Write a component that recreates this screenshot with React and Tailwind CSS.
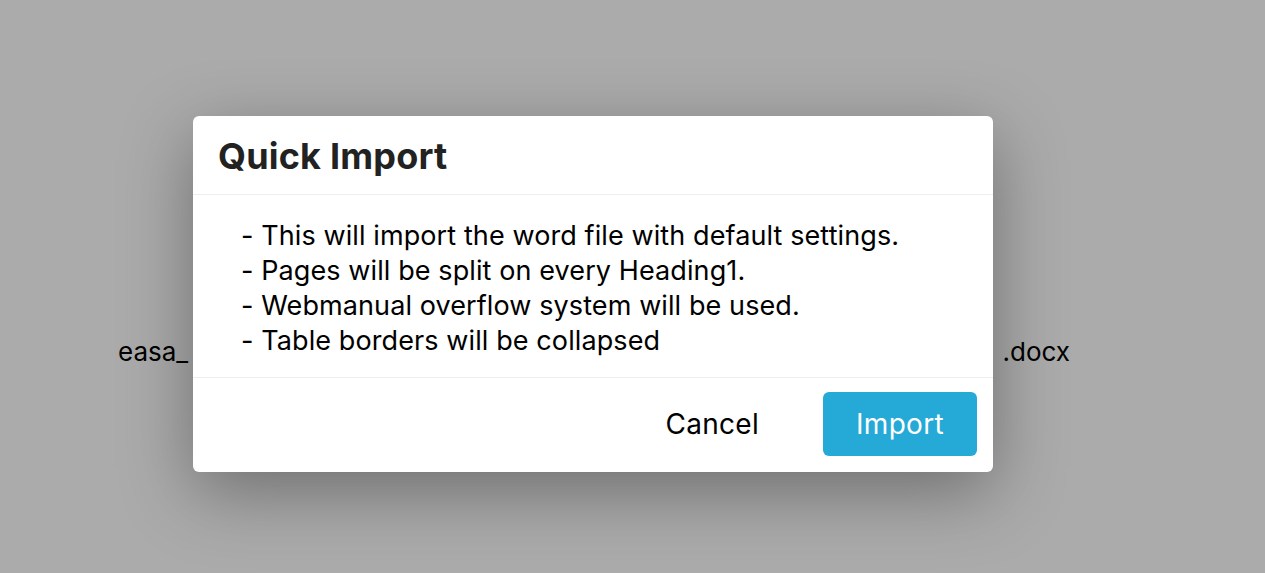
import React from "react";

const notes = [
  "- This will import the word file with default settings.",
  "- Pages will be split on every Heading1.",
  "- Webmanual overflow system will be used.",
  "- Table borders will be collapsed",
];

const QuickImportDialog = () => {
  return (
    <div className="absolute left-[193px] top-[116px] w-[800px] rounded-md bg-white shadow-[0_20px_70px_rgba(0,0,0,0.35)]">
      <div className="border-b border-[#eeeeee] px-[25px] pt-[20px] pb-[18px]">
        <h1 className="text-[36px] font-bold leading-[40px] tracking-[0.2px] text-[#222222]">
          Quick Import
        </h1>
      </div>
      <div className="border-b border-[#eeeeee] pl-[48px] pt-[23px] pb-[19px]">
        {notes.map((note, index) => (
          <p key={index} className="text-[27px] leading-[35px] tracking-[0.1px] text-black">
            {note}
          </p>
        ))}
      </div>
      <div className="flex items-center justify-end gap-[64px] px-[16px] pt-[14px] pb-[16px]">
        <button className="text-[28px] tracking-[0.3px] text-black">Cancel</button>
        <button className="h-[64px] w-[154px] rounded-md bg-[#25a9d7] text-[28px] tracking-[0.3px] text-white">
          Import
        </button>
      </div>
    </div>
  );
};

export default function App() {
  return (
    <div
      className="relative h-[573px] w-full overflow-hidden bg-[#ababab]"
      style={{ fontFamily: "Inter, 'Noto Sans', sans-serif" }}
    >
      <div className="ml-[118px] flex w-[952px] justify-between pt-[336px] text-[26px] leading-[32px] text-black">
        <span>easa_</span>
        <span>.docx</span>
      </div>
      <QuickImportDialog />
    </div>
  );
}
